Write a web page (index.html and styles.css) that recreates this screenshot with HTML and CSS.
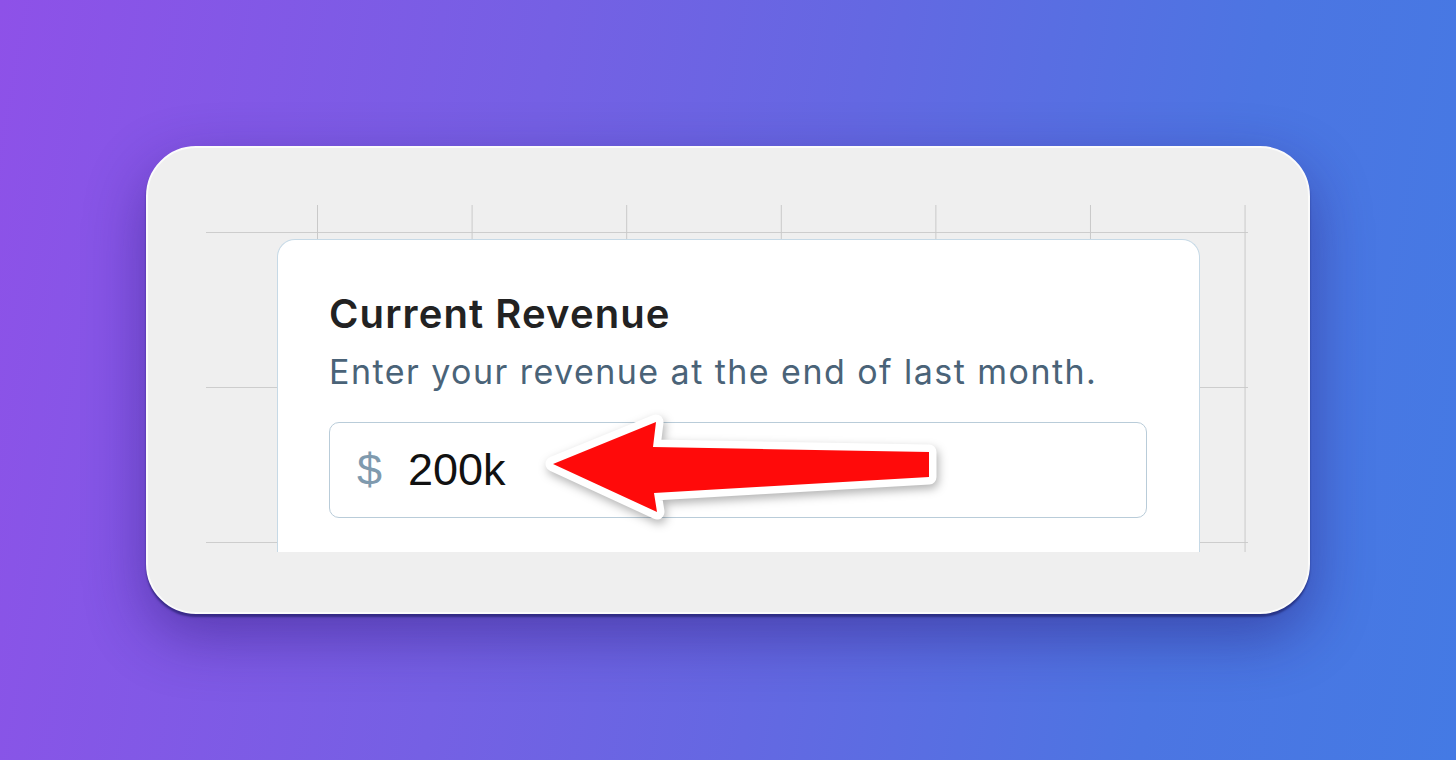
FILE: index.html
```html
<!DOCTYPE html>
<html lang="en">
<head>
<meta charset="utf-8">
<title>Current Revenue</title>
<link rel="stylesheet" href="styles.css">
</head>
<body>
<main class="stage">
  <section class="panel">
    <div class="viewport">
      <div class="card">
        <h1 class="title">Current Revenue</h1>
        <p class="subtitle">Enter your revenue at the end of last month.</p>
        <div class="field">
          <span class="currency">$</span>
          <span class="value">200k</span>
          <svg class="arrow" width="420" height="130" viewBox="0 0 420 130" aria-hidden="true">
            <path d="M22 63 L125 21 L122 46 L398 51 L398 76 L123 92 L126 111 Z" fill="#ff0a0a" stroke="#ffffff" stroke-width="15" stroke-linejoin="round" paint-order="stroke"/>
          </svg>
        </div>
      </div>
    </div>
  </section>
</main>
</body>
</html>
```

FILE: styles.css
```css
html, body {
  margin: 0;
  padding: 0;
}

body {
  width: 1456px;
  height: 760px;
  overflow: hidden;
  background: linear-gradient(100deg, #8e51e8 0%, #7560e4 35%, #6468e2 55%, #4c75e2 80%, #447ae4 100%);
  font-family: Inter, "Noto Sans", sans-serif;
}

.stage {
  width: 100%;
  height: 100%;
  display: flex;
  align-items: center;
  justify-content: center;
}

.panel {
  box-sizing: border-box;
  width: 1164px;
  height: 468px;
  padding: 57px 60px 60px 58px;
  background: #efefef;
  border: 2px solid #fbfbfb;
  border-radius: 50px;
  box-shadow: 0 3px 2px rgba(20, 22, 90, 0.55), 0 22px 60px rgba(40, 20, 110, 0.45);
}

.viewport {
  position: relative;
  width: 1042px;
  height: 347px;
  overflow: hidden;
  background-color: #efefef;
  background-image:
    linear-gradient(to right, #c9c9c9 1px, transparent 1px),
    linear-gradient(to bottom, #cdcdcd 1px, transparent 1px);
  background-size: 154.6px 100%, 100% 155px;
  background-position: 111px 0, 0 27px;
}

.card {
  box-sizing: border-box;
  width: 923px;
  height: 400px;
  margin: 34px 0 0 71px;
  padding: 50px 52px 0 51px;
  background: #ffffff;
  border: 1px solid #c6d9e6;
  border-bottom: none;
  border-radius: 18px 18px 0 0;
}

.title {
  margin: 0;
  font-size: 40px;
  line-height: 48px;
  font-weight: 600;
  color: #222222;
  letter-spacing: 1.1px;
}

.subtitle {
  margin: 13px 0 0;
  font-size: 34px;
  line-height: 42px;
  font-weight: 400;
  color: #4a6378;
  letter-spacing: 1.45px;
}

.field {
  position: relative;
  box-sizing: border-box;
  margin-top: 29px;
  width: 818px;
  height: 96px;
  padding-left: 27px;
  display: flex;
  align-items: center;
  gap: 6px;
  border: 1px solid #b9ccd9;
  border-radius: 10px;
  font-family: "Liberation Sans", Arial, sans-serif;
  font-size: 45px;
}

.currency {
  color: #7f9aae;
  width: 45px;
}

.value {
  color: #111111;
}

.arrow {
  position: absolute;
  left: 201px;
  top: -22px;
  overflow: visible;
  filter: drop-shadow(2px 4px 5px rgba(0, 0, 0, 0.3));
}
```
